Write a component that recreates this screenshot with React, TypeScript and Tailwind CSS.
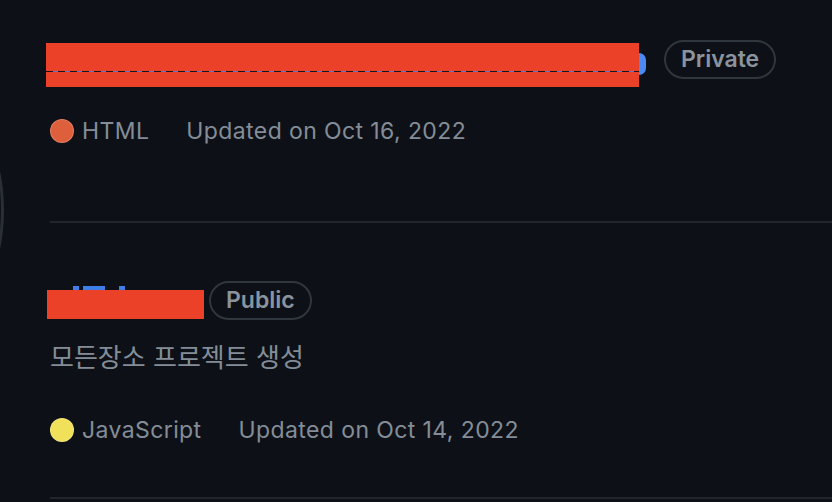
import React from "react";

type Repo = {
  visibility: string;
  language: string;
  langColor: string;
  updated: string;
  description?: string;
};

const font = { fontFamily: "Inter, 'Noto Sans CJK KR', sans-serif" };

function Badge({ label }: { label: string }) {
  return (
    <span className="flex h-[39px] items-center rounded-full border-2 border-[#30363d] px-[15px] text-[23px] font-semibold leading-none text-[#8b949e]">
      {label}
    </span>
  );
}

function Meta({ repo }: { repo: Repo }) {
  return (
    <div className="flex h-[30px] items-center text-[23px] tracking-[0.4px] text-[#848d97]">
      <span
        className={`h-[24px] w-[24px] shrink-0 rounded-full border border-white/20 ${repo.langColor}`}
      />
      <span className="ml-[8px]">{repo.language}</span>
      <span className="ml-[37px]">Updated on {repo.updated}</span>
    </div>
  );
}

export default function App() {
  return (
    <div
      className="relative h-[502px] w-[832px] overflow-hidden bg-[#0d1117]"
      style={font}
    >
      {/* faint edge of something to the left */}
      <div className="pointer-events-none absolute left-[-116px] top-[100px] h-[220px] w-[120px] rounded-[50%] border-r-[3px] border-[#2a2f36]" />

      <div className="pl-[50px]">
        {/* repo 1 */}
        <div className="border-b-2 border-[#21262d] pb-[75px] pt-[40px]">
          <div className="flex items-start">
            <div className="relative ml-[-4px] mt-[3px] h-[44px] w-[593px] bg-[#ea4128]">
              <div className="absolute left-0 right-0 top-[28px] h-px bg-[repeating-linear-gradient(90deg,#1b1220_0px,#1b1220_7px,#6a72c8_7px,#6a72c8_12px)]" />
            </div>
            <div className="mt-[13px] h-[22px] w-[7px] rounded-r-full bg-[#4a8af4]" />
            <div className="ml-[18px]">
              <Badge label="Private" />
            </div>
          </div>
          <div className="mt-[29px]">
            <Meta
              repo={{
                visibility: "Private",
                language: "HTML",
                langColor: "bg-[#de5f3c]",
                updated: "Oct 16, 2022",
              }}
            />
          </div>
        </div>

        {/* repo 2 */}
        <div className="border-b-2 border-[#21262d] pb-[52px] pt-[58px]">
          <div className="flex items-start">
            <div className="relative ml-[-3px] mt-[5px] h-[33px] w-[157px]">
              <div className="absolute left-[26px] top-0 flex gap-[4px]">
                <span className="h-[5px] w-[6px] bg-[#3f7de8]" />
                <span className="h-[5px] w-[22px] bg-[#3f7de8]" />
                <span className="ml-[10px] h-[5px] w-[6px] bg-[#3f7de8]" />
              </div>
              <div className="absolute bottom-0 left-0 right-0 top-[4px] bg-[#ea4128]" />
            </div>
            <div className="ml-[5px]">
              <Badge label="Public" />
            </div>
          </div>
          <p className="mt-[21px] text-[26px] leading-[34px] text-[#848d97]">
            모든장소 프로젝트 생성
          </p>
          <div className="mt-[40px]">
            <Meta
              repo={{
                visibility: "Public",
                language: "JavaScript",
                langColor: "bg-[#f1e05a]",
                updated: "Oct 14, 2022",
              }}
            />
          </div>
        </div>
      </div>
    </div>
  );
}
